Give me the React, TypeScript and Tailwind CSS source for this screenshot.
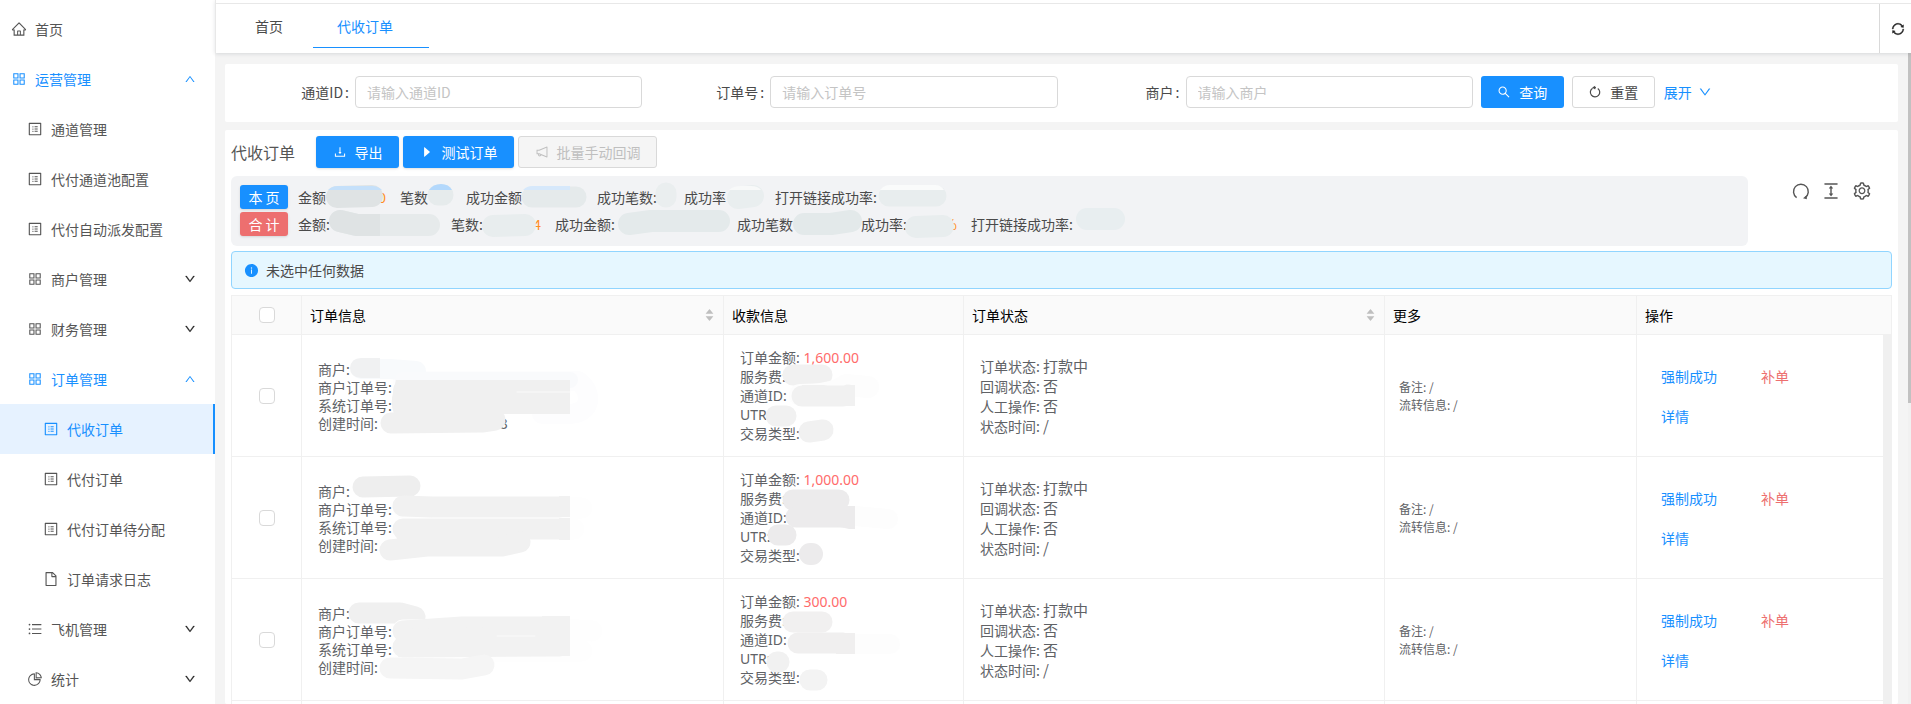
import React, { useState } from "react";
import {
  AiFillCaretDown,
  AiFillCaretUp,
  AiFillInfoCircle,
  AiOutlineAppstore,
  AiOutlineCaretRight,
  AiOutlineColumnHeight,
  AiOutlineDown,
  AiOutlineDownload,
  AiOutlineFile,
  AiOutlineHome,
  AiOutlineNotification,
  AiOutlinePieChart,
  AiOutlineProfile,
  AiOutlineSearch,
  AiOutlineSetting,
  AiOutlineSync,
  AiOutlineUnorderedList,
  AiOutlineUp,
} from "react-icons/ai";

// a brush stroke that hides a private value
interface Stroke {
  d: string;
  color: string;
  width?: number;
}

const menu = [
  { name: "首页", icon: AiOutlineHome, level: 0 },
  { name: "运营管理", icon: AiOutlineAppstore, level: 0, open: true },
  { name: "通道管理", icon: AiOutlineProfile, level: 1 },
  { name: "代付通道池配置", icon: AiOutlineProfile, level: 1 },
  { name: "代付自动派发配置", icon: AiOutlineProfile, level: 1 },
  { name: "商户管理", icon: AiOutlineAppstore, level: 1, open: false },
  { name: "财务管理", icon: AiOutlineAppstore, level: 1, open: false },
  { name: "订单管理", icon: AiOutlineAppstore, level: 1, open: true },
  { name: "代收订单", icon: AiOutlineProfile, level: 2, active: true },
  { name: "代付订单", icon: AiOutlineProfile, level: 2 },
  { name: "代付订单待分配", icon: AiOutlineProfile, level: 2 },
  { name: "订单请求日志", icon: AiOutlineFile, level: 2 },
  { name: "飞机管理", icon: AiOutlineUnorderedList, level: 1, open: false },
  { name: "统计", icon: AiOutlinePieChart, level: 1, open: false },
];

const indent = ["pl-[11px]", "pl-[27px]", "pl-[43px]"];

const filters = [
  { id: "channel", label: "通道ID", placeholder: "请输入通道ID" },
  { id: "order", label: "订单号", placeholder: "请输入订单号" },
  { id: "merchant", label: "商户", placeholder: "请输入商户" },
];

const pageStats = [
  { label: "金额", value: "0", width: "w-[102px]" },
  { label: "笔数", width: "w-[66px]" },
  { label: "成功金额", width: "w-[131px]" },
  { label: "成功笔数:", width: "w-[87px]" },
  { label: "成功率", width: "w-[91px]" },
  { label: "打开链接成功率:", width: "w-[180px]" },
];

const totalStats = [
  { label: "金额:", width: "w-[153px]" },
  { label: "笔数:", value: "4", width: "w-[104px]" },
  { label: "成功金额:", width: "w-[182px]" },
  { label: "成功笔数", width: "w-[124px]" },
  { label: "成功率:", value: "%", width: "w-[110px]" },
  { label: "打开链接成功率:", width: "w-[180px]" },
];

const statStrokes: Stroke[] = [
  { d: "M106 21L141 20", color: "#dfe3e4", width: 22 },
  { d: "M97 14Q101 10 107 10H141Q147 10 151 14Z", color: "#c5e0fa", width: 0 },
  { d: "M207 19H212", color: "#e6ebec", width: 21 },
  { d: "M198 14Q202 8 210 8Q218 8 221 14Z", color: "#b3d8fc", width: 0 },
  { d: "M301 21H345", color: "#e5eaeb", width: 21 },
  { d: "M292 14Q296 10 301 10H339V14Z", color: "#d6e8fb", width: 0 },
  { d: "M435 17V21", color: "#eaeeef", width: 21 },
  { d: "M507 22L522 20", color: "#e9eeef", width: 22 },
  { d: "M498 14Q502 10 510 10H520Q527 10 530 14Z", color: "#f8f9f9", width: 0 },
  { d: "M658 20H705", color: "#e8edee", width: 21 },
  { d: "M649 14Q653 9 659 9H704Q710 9 713 14Z", color: "#fafbfb", width: 0 },
  { d: "M109 45L126 49H198", color: "#e6eaeb", width: 22 },
  { d: "M109 45L126 49H149", color: "#dfe3e4", width: 22 },
  { d: "M149 38H160V60H149Z", color: "#e6eaeb", width: 0 },
  { d: "M262 50L294 49", color: "#e8edee", width: 22 },
  { d: "M398 48L420 45H488", color: "#e4eaeb", width: 22 },
  { d: "M573 48H600L620 45", color: "#e3e9ea", width: 22 },
  { d: "M685 51L712 50", color: "#e8edee", width: 22 },
  { d: "M856 43H883", color: "#e8eef0", width: 22 },
];

const orders = [
  {
    amount: "1,600.00",
    lastDigit: "3",
    info: [
      { d: "M101 46H276Q287 54 286 66Q284 78 268 79H240", color: "#fdfdfe", width: 20 },
      { d: "M59 34H88L114 36", color: "#f8fafc", width: 20 },
      { d: "M101 45H268", color: "#f9fafc", width: 16 },
      { d: "M59 33H78V43H59Q48 42 48 33Q49 23 59 23H78V33", color: "#f0f1f2", width: 0 },
      { d: "M94 45H268V57H268V79H92Q88 68 91 58Z", color: "#f0f0f0", width: 0 },
      { d: "M101 69H108M101 55H108", color: "#f0f0f0", width: 20 },
      { d: "M215 57H268", color: "#fafafa", width: 1 },
      { d: "M89 88L180 87L193 85", color: "#f0f0f0", width: 21 },
    ],
    pay: [
      { d: "M69 40H98", color: "#f1f1f1", width: 21 },
      { d: "M76 60Q110 60 122 50L144 52", color: "#fdfdfd", width: 22 },
      { d: "M78 50H100Q116 55 118 53Q120 48 128 50H131V71H78Z", color: "#f1f1f1", width: 0 },
      { d: "M78 61H119", color: "#f1f1f1", width: 21 },
      { d: "M52 81H62", color: "#f1f1f1", width: 21 },
      { d: "M85 97L99 95", color: "#f1f1f1", width: 21 },
    ],
  },
  {
    amount: "1,000.00",
    info: [
      { d: "M61 30L108 29", color: "#eeeeee", width: 21 },
      { d: "M101 51H280M101 73L272 72", color: "#fefefe", width: 21 },
      { d: "M101 49L130 50H257M101 72H257", color: "#f1f1f1", width: 21 },
      { d: "M257 39H268V60H257ZM257 61H268V83H257Z", color: "#f1f1f1", width: 0 },
      { d: "M88 93L125 89H200L218 85", color: "#f1f1f1", width: 21 },
      { d: "M101 78H190", color: "#f1f1f1", width: 14 },
    ],
    pay: [
      { d: "M69 43H115", color: "#ecebec", width: 21 },
      { d: "M131 59L164 62", color: "#fdfdfd", width: 20 },
      { d: "M72 60H120", color: "#ecebec", width: 21 },
      { d: "M112 49H131V72H125L112 69Z", color: "#ecebec", width: 0 },
      { d: "M54 78H62", color: "#ecebec", width: 21 },
      { d: "M86 97H88", color: "#ecebec", width: 22 },
    ],
  },
  {
    amount: "300.00",
    info: [
      { d: "M57 34H98L113 38", color: "#f0f0f0", width: 21 },
      { d: "M101 51L250 49L290 52M101 72H280", color: "#fefefe", width: 21 },
      { d: "M101 52L160 48H257M101 68L257 67", color: "#f2f2f2", width: 21 },
      { d: "M101 50L190 48V78H96Z", color: "#f2f2f2", width: 0 },
      { d: "M240 37H268V77H240Z", color: "#f2f2f2", width: 0 },
      { d: "M88 89L160 90L182 86", color: "#f5f5f5", width: 21 },
      { d: "M195 57H233", color: "#fafafa", width: 1 },
    ],
    pay: [
      { d: "M69 43H98", color: "#f1f0f0", width: 21 },
      { d: "M131 65H166", color: "#fdfdfd", width: 20 },
      { d: "M74 64H119", color: "#f0efef", width: 21 },
      { d: "M112 54H131V75H112Z", color: "#f0efef", width: 0 },
      { d: "M53 83H55", color: "#f1f1f1", width: 21 },
      { d: "M86 101H93", color: "#f3f3f3", width: 21 },
    ],
  },
];

const Strokes = ({ items }: { items: Stroke[] }) => (
  <svg
    className="absolute left-0 top-0 h-full w-full pointer-events-none"
    fill="none"
    strokeLinecap="round"
    strokeLinejoin="round"
    aria-hidden="true"
  >
    {items.map((s, i) => (
      <path
        key={i}
        d={s.d}
        fill={s.width ? "none" : s.color}
        stroke={s.width ? s.color : "none"}
        strokeWidth={s.width}
      />
    ))}
  </svg>
);

// open ring with the arrow head at the upper left
const ResetIcon = () => (
  <svg width="14" height="14" viewBox="0 0 14 14" fill="none" stroke="currentColor" strokeWidth="1.2">
    <path d="M4.6 3.2A4.7 4.7 0 1 0 9.8 3.4" />
    <path d="M4.2 2.6L7.2 0.8V4.6Z" fill="currentColor" stroke="none" />
    <path d="M5.5 2.7H8" />
  </svg>
);

// ring open at the bottom, arrow head at the lower right
const ReloadIcon = () => (
  <svg width="18" height="18" viewBox="0 0 18 18" fill="none" stroke="currentColor" strokeWidth="1.4">
    <path d="M4.6 15.6A7.4 7.4 0 1 1 13.2 15.6" />
    <path d="M11 16.2L14.8 17.2L14.8 13.2Z" fill="currentColor" stroke="none" />
  </svg>
);

const Check = ({ label }: { label: string }) => (
  <input
    type="checkbox"
    aria-label={label}
    className="block mx-auto size-4 appearance-none rounded-sm border border-[#d9d9d9] bg-white checked:bg-[#1890ff]"
  />
);

const Sorter = () => (
  <span className="flex flex-col text-[#bfbfbf]">
    <AiFillCaretUp size={11} className="-mb-[2px]" />
    <AiFillCaretDown size={11} className="-mt-[2px]" />
  </span>
);

const StatRow = ({ tag, color, items }: any) => (
  <div className="flex items-center h-6">
    <span
      className={`w-12 h-6 mr-[10px] rounded-[3px] text-center leading-6 text-white shadow-sm ${color}`}
    >
      {tag}
    </span>
    {items.map((item: any) => (
      <span
        key={item.label}
        className={`flex justify-between pr-[14px] whitespace-nowrap ${item.width}`}
      >
        {item.label}
        {item.value && <b className="font-normal text-[#ff8f1f]">{item.value}</b>}
      </span>
    ))}
  </div>
);

export default function App() {
  const [tab, setTab] = useState("代收订单");

  return (
    <div className="flex h-screen overflow-hidden bg-white text-sm text-[#4a4a4a] [font-family:'Noto_Sans_CJK_SC',sans-serif]">
      {/* sidebar */}
      <nav className="w-[215px] shrink-0 pt-1 text-[#555]">
        {menu.map((m) => (
          <a
            key={m.name}
            href="#"
            className={`flex items-center h-[50px] pr-[19px] ${indent[m.level]} ${
              m.active ? "bg-[#e6f2ff] border-r-2 border-[#1890ff]" : ""
            } ${m.active || m.open ? "text-[#1890ff]" : ""}`}
          >
            <m.icon size={16} className="mr-2" />
            <span className="flex-1">{m.name}</span>
            {m.open === true && <AiOutlineUp size={12} />}
            {m.open === false && (
              <AiOutlineDown size={12} strokeWidth={30} className="text-[#222]" />
            )}
          </a>
        ))}
      </nav>

      <div className="flex flex-col flex-1 min-w-0">
        {/* tabs */}
        <header className="pt-[3px] border-l border-[#e8e8e8] relative z-10 bg-white shadow-[0_1px_4px_rgba(0,21,41,0.12)]">
          <div className="flex h-[50px] border-t border-[#e8e8e8]">
            <div className="flex flex-1 pl-[15px] gap-[6px]">
              {["首页", "代收订单"].map((t) => (
                <button
                  key={t}
                  onClick={() => setTab(t)}
                  className={`h-11 px-6 border-b text-left ${
                    tab === t
                      ? "w-[116px] border-[#1890ff] text-[#1890ff]"
                      : "border-transparent"
                  }`}
                >
                  {t}
                </button>
              ))}
            </div>
            <button
              aria-label="刷新"
              className="w-8 pl-[11px] border-l border-[#d9d9d9] text-[#222]"
            >
              <AiOutlineSync size={14} strokeWidth={30} />
            </button>
          </div>
        </header>

        <div className="flex flex-1 min-h-0 bg-[#f4f4f4]">
          <main className="flex flex-col flex-1 min-w-0 pl-[10px] pr-[10px] pt-[11px]">
            {/* search form */}
            <form
              className="grid grid-cols-4 shrink-0 px-[6px] pt-3 pb-[14px] bg-white rounded-xs"
              onSubmit={(e) => e.preventDefault()}
            >
              {filters.map((f) => (
                <div key={f.id} className="flex items-center px-1">
                  <label htmlFor={f.id} className="w-[120px] pr-[6px] text-right">
                    {f.label}
                    <span className="ml-[2px]">:</span>
                  </label>
                  <input
                    id={f.id}
                    placeholder={f.placeholder}
                    className="flex-1 min-w-0 h-8 px-[11px] border border-[#d9d9d9] rounded-sm outline-none placeholder:text-[#c4c4c4]"
                  />
                </div>
              ))}
              <div className="flex items-center px-1">
                <button className="flex items-center justify-center gap-2 w-[83px] h-8 mr-2 rounded-[3px] bg-[#1890ff] text-white">
                  <AiOutlineSearch size={14} />
                  查询
                </button>
                <button
                  type="reset"
                  className="flex items-center justify-center gap-2 w-[83px] h-8 mr-[9px] border border-[#d9d9d9] rounded-[3px]"
                >
                  <ResetIcon />
                  重置
                </button>
                <a href="#" className="flex items-center gap-[6px] text-[#1890ff]">
                  展开 <AiOutlineDown size={14} />
                </a>
              </div>
            </form>

            <section className="flex flex-col flex-1 min-h-0 mt-2 px-[6px] pt-[6px] bg-white rounded-xs">
              {/* toolbar */}
              <div className="flex items-center shrink-0 gap-1">
                <h1 className="w-[81px] text-base text-[#555]">代收订单</h1>
                <button className="flex items-center justify-center gap-2 w-[83px] h-8 rounded-[3px] bg-[#1890ff] text-white shadow-sm">
                  <AiOutlineDownload size={14} />
                  导出
                </button>
                <button className="flex items-center justify-center gap-2 w-[111px] h-8 rounded-[3px] bg-[#1890ff] text-white shadow-sm">
                  <AiOutlineCaretRight size={14} />
                  测试订单
                </button>
                <button
                  disabled
                  className="flex items-center justify-center gap-2 w-[139px] h-8 border border-[#d9d9d9] rounded-[3px] bg-[#f5f5f5] text-[#bfbfbf]"
                >
                  <AiOutlineNotification size={14} />
                  批量手动回调
                </button>
              </div>

              {/* stats */}
              <div className="flex shrink-0 mt-2">
                <div className="relative flex flex-col flex-1 gap-[3px] h-[70px] pl-[9px] pt-[9px] rounded-md bg-[#f2f3f5] overflow-hidden">
                  <StatRow tag="本 页" color="bg-[#1890ff]" items={pageStats} />
                  <StatRow tag="合 计" color="bg-[#ed6f6f]" items={totalStats} />
                  <Strokes items={statStrokes} />
                </div>
                <div className="flex items-start justify-center gap-[11px] w-[144px] pt-[5px] pl-[24px] text-[#555]">
                  <button aria-label="刷新" className="flex items-center h-5">
                    <ReloadIcon />
                  </button>
                  <button aria-label="密度">
                    <AiOutlineColumnHeight size={20} />
                  </button>
                  <button aria-label="列设置">
                    <AiOutlineSetting size={20} />
                  </button>
                </div>
              </div>

              <div className="flex items-center shrink-0 h-[38px] mt-[5px] pl-3 gap-[7px] border border-[#91d5ff] rounded-sm bg-[#e6f7ff]">
                <AiFillInfoCircle size={15} className="text-[#1890ff]" />
                未选中任何数据
              </div>

              {/* orders */}
              <div className="flex-1 min-h-0 mt-[6px] overflow-hidden">
                <table className="w-full table-fixed border-collapse text-left text-[#606266]">
                  <colgroup>
                    <col className="w-[70px]" />
                    <col className="w-[422px]" />
                    <col className="w-[240px]" />
                    <col className="w-[421px]" />
                    <col className="w-[252px]" />
                    <col />
                    <col className="w-2" />
                  </colgroup>
                  <thead className="bg-[#fafafa] text-black">
                    <tr className="h-[39px] border border-[#f0f0f0]">
                      <th className="border border-[#f0f0f0]">
                        <Check label="全选" />
                      </th>
                      <th className="px-2 border border-[#f0f0f0] font-normal">
                        <div className="flex items-center justify-between">
                          订单信息 <Sorter />
                        </div>
                      </th>
                      <th className="px-2 border border-[#f0f0f0] font-normal">收款信息</th>
                      <th className="px-2 border border-[#f0f0f0] font-normal">
                        <div className="flex items-center justify-between">
                          订单状态 <Sorter />
                        </div>
                      </th>
                      <th className="px-2 border border-[#f0f0f0] font-normal">更多</th>
                      <th colSpan={2} className="px-2 border border-[#f0f0f0] font-normal">
                        操作
                      </th>
                    </tr>
                  </thead>
                  <tbody>
                    {orders.map((o) => (
                      <tr key={o.amount} className="h-[122px]">
                        <td className="border border-[#f0f0f0]">
                          <Check label={o.amount} />
                        </td>
                        <td className="relative px-4 border border-[#f0f0f0] leading-[18px]">
                          <p>商户:</p>
                          <p>商户订单号:</p>
                          <p>系统订单号:</p>
                          <p className="flex">
                            <span className="w-[182px]">创建时间:</span>
                            {o.lastDigit}
                          </p>
                          <Strokes items={o.info} />
                        </td>
                        <td className="relative px-4 border border-[#f0f0f0] leading-[19px] [font-family:'Noto_Sans','Noto_Sans_CJK_SC',sans-serif]">
                          <p>
                            订单金额: <span className="text-[#ff6b6b]">{o.amount}</span>
                          </p>
                          <p>服务费:</p>
                          <p>通道ID:</p>
                          <p>UTR:</p>
                          <p>交易类型:</p>
                          <Strokes items={o.pay} />
                        </td>
                        <td className="px-4 border border-[#f0f0f0] leading-5">
                          <p>
                            订单状态: <span className="text-[15px]">打款中</span>
                          </p>
                          <p>
                            回调状态: <span className="text-[15px]">否</span>
                          </p>
                          <p>
                            人工操作: <span className="text-[15px]">否</span>
                          </p>
                          <p>
                            状态时间: <span className="text-[15px]">/</span>
                          </p>
                        </td>
                        <td className="px-[14px] border border-[#f0f0f0] text-xs leading-[18px]">
                          <p>备注: /</p>
                          <p>流转信息: /</p>
                        </td>
                        <td className="px-6 border border-[#f0f0f0]">
                          <div className="grid grid-cols-[100px_1fr] gap-y-5 justify-items-start text-[#1890ff]">
                            <button>强制成功</button>
                            <button className="text-[#ed6f6f]">补单</button>
                            <button>详情</button>
                          </div>
                        </td>
                        <td className="bg-[#f0f0f0]" />
                      </tr>
                    ))}
                    <tr className="h-[122px]">
                      {["a", "b", "c", "d", "e", "f"].map((k) => (
                        <td key={k} className="border border-[#f0f0f0]" />
                      ))}
                      <td className="bg-[#f0f0f0]" />
                    </tr>
                  </tbody>
                </table>
              </div>
            </section>
          </main>
          {/* page scrollbar */}
          <div className="w-[3px] bg-[#f1f1f1]">
            <div className="h-[350px] bg-[#c1c1c1]" />
          </div>
        </div>
      </div>
    </div>
  );
}
